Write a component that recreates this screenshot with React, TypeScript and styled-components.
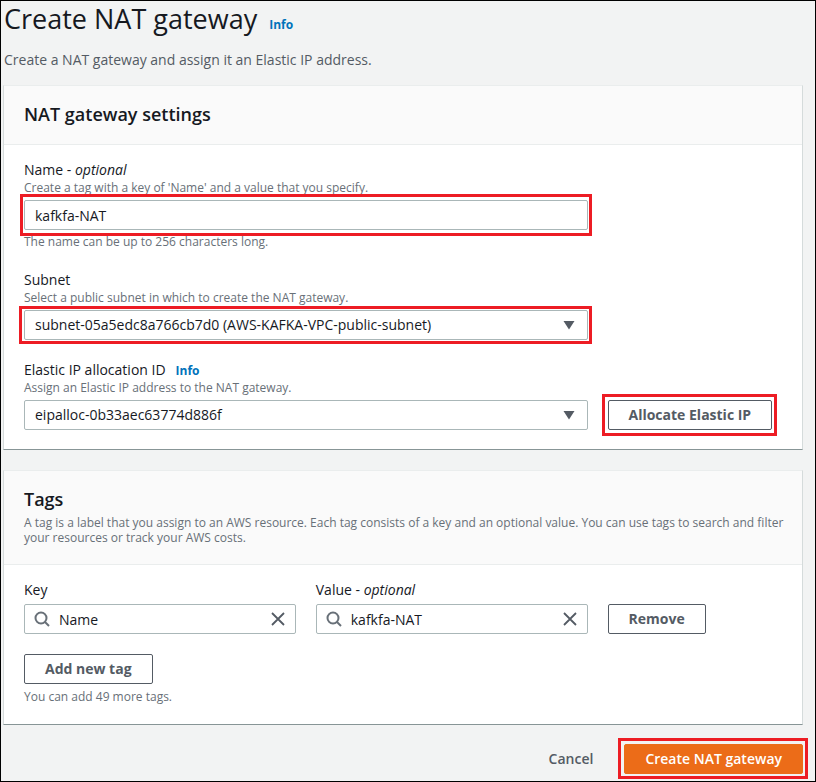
import React, { useState } from "react";
import styled, { createGlobalStyle, css } from "styled-components";

const GlobalStyle = createGlobalStyle`
  *, *::before, *::after { box-sizing: border-box; }
  body {
    margin: 0;
    background: #f2f3f3;
    color: #16191f;
    font-family: "Open Sans", "Noto Sans", sans-serif;
    font-size: 14px;
    line-height: 20px;
  }
  button, input, select { font: inherit; color: inherit; }
  h1, h2, p { margin: 0; font-weight: 400; }
`;

const Page = styled.main`
  min-height: 100vh;
  display: flex;
  flex-direction: column;
  border: 1px solid #000;
  padding: 0 12px 7px 2px;
`;

const TitleRow = styled.div`
  display: flex;
  align-items: baseline;
  gap: 12px;
  padding: 0 1px;
`;

const Title = styled.h1`
  font-size: 27px;
  line-height: 36px;
`;

const InfoLink = styled.a`
  color: #0073bb;
  font-size: 12px;
  line-height: 16px;
  font-weight: 700;
  text-decoration: none;
`;

const Intro = styled.p`
  padding: 13px 1px 15px;
  color: #545b64;
`;

const Cards = styled.div`
  display: flex;
  flex-direction: column;
  gap: 20px;
`;

const Card = styled.section`
  background: #fff;
  border: 1px solid #d5dbdb;
  border-top-color: #eaeded;
  border-bottom-color: #879596;
`;

const CardHeader = styled.header`
  display: flex;
  flex-direction: column;
  gap: 5px;
  padding: 17px 10px 19px 20px;
  background: #fafafa;
  border-bottom: 1px solid #eaeded;
`;

const CardTitle = styled.h2`
  font-size: 18px;
  line-height: 22px;
  font-weight: 600;
`;

const CardText = styled.p`
  color: #687078;
  font-size: 12px;
  line-height: 15px;
`;

const CardBody = styled.div`
  display: flex;
  flex-direction: column;
  gap: 20px;
  padding: 15px 20px 19px;
`;

const Grid = styled.div`
  display: grid;
  grid-template-columns: repeat(4, 1fr);
  column-gap: 20px;
  align-items: end;
  justify-items: start;
`;

const Wide = styled.div`
  grid-column: span 3;
  width: 100%;
`;

const Pair = styled(Wide)`
  display: grid;
  grid-template-columns: 1fr 1fr;
  column-gap: 20px;
`;

const LabelRow = styled.div`
  display: flex;
  align-items: baseline;
  gap: 10px;
  height: 20px;
`;

const Hint = styled.p`
  color: #687078;
  font-size: 12px;
  line-height: 16px;
`;

const callout = css<{ $callout?: string }>`
  ${({ $callout }) =>
    $callout &&
    css`
      &::after {
        content: "";
        position: absolute;
        inset: ${$callout};
        border: 3px solid #ed1c24;
        pointer-events: none;
      }
    `}
`;

const Control = styled.div<{ $callout?: string }>`
  position: relative;
  display: flex;
  align-items: center;
  margin-top: 4px;
  ${callout}

  & + ${Hint} { margin-top: 4px; }
`;

const ButtonSlot = styled.div<{ $callout?: string }>`
  position: relative;
  display: flex;
  ${callout}
`;

const AddRow = styled.div`
  display: flex;
  flex-direction: column;
  align-items: flex-start;
  gap: 5px;
`;

const field = css`
  width: 100%;
  height: 30px;
  border: 1px solid #aab7b8;
  border-radius: 2px;
  background: #fff;
  outline-color: #00a1c9;
`;

const TextInput = styled.input`
  ${field}
  padding: 0 10px;
`;

const SearchInput = styled.input`
  ${field}
  padding: 0 34px;
`;

const Select = styled.select`
  ${field}
  appearance: none;
  padding: 0 34px 0 10px;
`;

const SearchMark = styled.span`
  position: absolute;
  left: 10px;
  display: flex;
  pointer-events: none;
`;

const CaretMark = styled.span`
  position: absolute;
  right: 13px;
  display: flex;
  pointer-events: none;
`;

const ClearButton = styled.button`
  position: absolute;
  right: 10px;
  display: flex;
  padding: 0;
  border: 0;
  background: none;
  color: #545b64;
  cursor: pointer;
`;

const Button = styled.button<{ $variant?: "normal" | "primary" | "link" }>`
  height: 30px;
  padding: 0 20px;
  border: 1px solid #545b64;
  border-radius: 2px;
  background: #fff;
  color: #545b64;
  font-weight: 700;
  white-space: nowrap;
  cursor: pointer;

  ${({ $variant }) =>
    $variant === "primary" &&
    css`
      border-color: #ec6c18;
      background: #ec6c18;
      color: #fff;
      font-weight: 600;
    `}
  ${({ $variant }) =>
    $variant === "link" &&
    css`
      border-color: transparent;
      background: transparent;
      font-weight: 600;
    `}
`;

const Actions = styled.footer`
  display: flex;
  justify-content: flex-end;
  gap: 10px;
  padding-top: 19px;
`;

const Caret = () => (
  <svg width="12" height="10" viewBox="0 0 12 10" aria-hidden="true">
    <path d="M.5 1h11L6 9.500z" fill="#545b64" />
  </svg>
);

const SearchIcon = () => (
  <svg width="16" height="16" viewBox="0 0 16 16" fill="none" stroke="#687078" strokeWidth="2" aria-hidden="true">
    <circle cx="7" cy="7" r="5.500" />
    <path d="M11 11l4 4" />
  </svg>
);

const CloseIcon = () => (
  <svg width="16" height="16" viewBox="0 0 16 16" fill="none" stroke="currentColor" strokeWidth="1.800" aria-hidden="true">
    <path d="M2 2l12 12M14 2L2 14" />
  </svg>
);

function SelectField({ id, value, highlight }: { id: string; value: string; highlight?: string }) {
  return (
    <Control $callout={highlight}>
      <Select id={id} defaultValue={value}>
        <option value={value}>{value}</option>
      </Select>
      <CaretMark>
        <Caret />
      </CaretMark>
    </Control>
  );
}

function TagField({ id, label, optional, initial }: { id: string; label: string; optional?: boolean; initial: string }) {
  const [value, setValue] = useState(initial);
  return (
    <div>
      <LabelRow>
        <label htmlFor={id}>
          {label}
          {optional && <> - <i>optional</i></>}
        </label>
      </LabelRow>
      <Control>
        <SearchMark>
          <SearchIcon />
        </SearchMark>
        <SearchInput id={id} value={value} onChange={(e) => setValue(e.target.value)} />
        <ClearButton type="button" aria-label={`Clear ${label}`} onClick={() => setValue("")}>
          <CloseIcon />
        </ClearButton>
      </Control>
    </div>
  );
}

export default function App() {
  return (
    <>
      <GlobalStyle />
      <Page>
        <TitleRow>
          <Title>Create NAT gateway</Title>
          <InfoLink href="#info">Info</InfoLink>
        </TitleRow>
        <Intro>Create a NAT gateway and assign it an Elastic IP address.</Intro>

        <Cards>
          <Card>
            <CardHeader>
              <CardTitle>NAT gateway settings</CardTitle>
            </CardHeader>
            <CardBody>
              <Grid>
                <Wide>
                  <LabelRow>
                    <label htmlFor="name">Name - <i>optional</i></label>
                  </LabelRow>
                  <Hint>Create a tag with a key of 'Name' and a value that you specify.</Hint>
                  <Control $callout="-6px -4px">
                    <TextInput id="name" defaultValue="kafkfa-NAT" />
                  </Control>
                  <Hint>The name can be up to 256 characters long.</Hint>
                </Wide>
              </Grid>
              <Grid>
                <Wide>
                  <LabelRow>
                    <label htmlFor="subnet">Subnet</label>
                  </LabelRow>
                  <Hint>Select a public subnet in which to create the NAT gateway.</Hint>
                  <SelectField
                    id="subnet"
                    value="subnet-05a5edc8a766cb7d0 (AWS-KAFKA-VPC-public-subnet)"
                    highlight="-4px -4px -4px -5px"
                  />
                </Wide>
              </Grid>
              <Grid>
                <Wide>
                  <LabelRow>
                    <label htmlFor="eip">Elastic IP allocation ID</label>
                    <InfoLink href="#eip-info">Info</InfoLink>
                  </LabelRow>
                  <Hint>Assign an Elastic IP address to the NAT gateway.</Hint>
                  <SelectField id="eip" value="eipalloc-0b33aec63774d886f" />
                </Wide>
                <ButtonSlot $callout="-6px -5px -6px -6px">
                  <Button type="button">Allocate Elastic IP</Button>
                </ButtonSlot>
              </Grid>
            </CardBody>
          </Card>

          <Card>
            <CardHeader>
              <CardTitle>Tags</CardTitle>
              <CardText>
                A tag is a label that you assign to an AWS resource. Each tag consists of a key and an optional value.
                You can use tags to search and filter your resources or track your AWS costs.
              </CardText>
            </CardHeader>
            <CardBody>
              <Grid>
                <Pair>
                  <TagField id="key" label="Key" initial="Name" />
                  <TagField id="value" label="Value" optional initial="kafkfa-NAT" />
                </Pair>
                <Button type="button">Remove</Button>
              </Grid>
              <AddRow>
                <Button type="button">Add new tag</Button>
                <Hint>You can add 49 more tags.</Hint>
              </AddRow>
            </CardBody>
          </Card>
        </Cards>

        <Actions>
          <Button type="button" $variant="link">Cancel</Button>
          <ButtonSlot $callout="-6px -5px -5px -6px">
            <Button type="submit" $variant="primary">Create NAT gateway</Button>
          </ButtonSlot>
        </Actions>
      </Page>
    </>
  );
}
